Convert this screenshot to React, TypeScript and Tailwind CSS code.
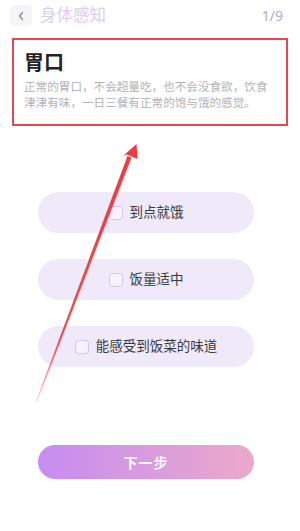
import React from "react";

const font = { fontFamily: '"Noto Sans", "Noto Sans CJK SC", sans-serif' };

function Option({ label }: { label: string }) {
  return (
    <div className="flex h-[41px] w-[216px] items-center justify-center gap-[7px] rounded-full bg-[#f0e9fa]">
      <span className="h-[14px] w-[14px] rounded-[3px] border border-[#d6c6ef] bg-[#f6f1fc]" />
      <span className="text-[13.5px] leading-none text-[#3a3a3a]">{label}</span>
    </div>
  );
}

export default function App() {
  return (
    <div className="relative h-[531px] w-[300px] overflow-hidden bg-white" style={font}>
      {/* header */}
      <div className="flex h-[30px] items-center px-[10px] pt-[1px]">
        <div className="flex h-[21px] w-[22px] items-center justify-center rounded-[5px] bg-[#f5f5f7]">
          <svg width="8" height="10" viewBox="0 0 8 10" fill="none">
            <path d="M5.5 1.5 L2.5 5 L5.5 8.5" stroke="#8a8a8a" strokeWidth="1.3" strokeLinecap="round" strokeLinejoin="round" />
          </svg>
        </div>
        <span className="ml-[8px] text-[16.5px] leading-none text-[#dccdf3]">身体感知</span>
        <span className="ml-auto mr-[7px] text-[14px] leading-none text-[#b9a3dd]">1/9</span>
      </div>

      {/* highlighted card */}
      <div className="mx-[12px] mt-[8px] h-[88px] border-2 border-[#e5464f] bg-white px-[10px] pt-[10px]">
        <div className="text-[20px] font-bold leading-[26px] text-[#222]">胃口</div>
        <div className="mt-[3px] text-[11.6px] leading-[16px] text-[#b3b3b3]">
          正常的胃口，不会超量吃，也不会没食欲，饮食津津有味，一日三餐有正常的饱与饿的感觉。
        </div>
      </div>

      {/* options */}
      <div className="mt-[66px] flex flex-col items-center gap-[26px] pr-[8px]">
        <Option label="到点就饿" />
        <Option label="饭量适中" />
        <Option label="能感受到饭菜的味道" />
      </div>

      {/* next button */}
      <div className="mt-[78px] flex justify-center pr-[8px]">
        <div className="flex h-[34px] w-[216px] items-center justify-center rounded-full bg-gradient-to-r from-[#c68cf1] to-[#eda8c9]">
          <span className="text-[14px] font-bold tracking-[1px] text-white">下一步</span>
        </div>
      </div>

      {/* annotation arrow */}
      <svg className="pointer-events-none absolute left-0 top-0" width="300" height="531" viewBox="0 0 300 531">
        <defs>
          <linearGradient id="fade" x1="136" y1="150" x2="36" y2="402" gradientUnits="userSpaceOnUse">
            <stop offset="0" stopColor="#ef3a3f" stopOpacity="1" />
            <stop offset="0.75" stopColor="#ef3a3f" stopOpacity="0.9" />
            <stop offset="1" stopColor="#ef3a3f" stopOpacity="0.2" />
          </linearGradient>
        </defs>
        <path d="M127.5 156 L131.5 157.5 L37 402 L36 401 Z" fill="url(#fade)" />
        <path d="M136.5 144 L137.5 159 L131.5 156.5 L127 154.5 L123 156 Z" fill="#ef3a3f" />
      </svg>
    </div>
  );
}
